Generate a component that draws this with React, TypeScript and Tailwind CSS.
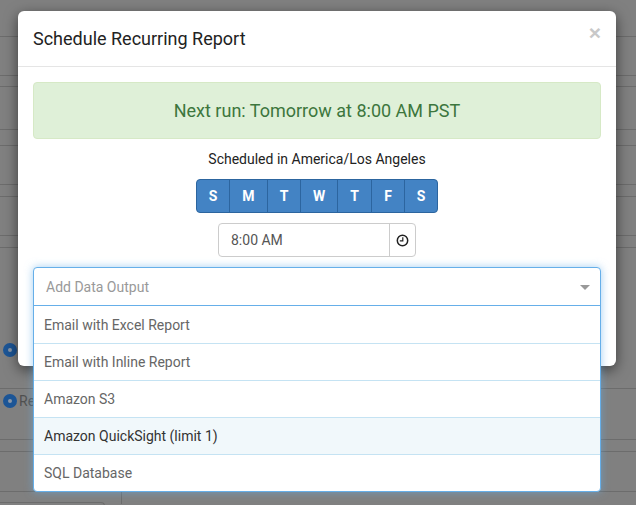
import React from 'react'

const days = [
  { label: 'S', w: 'w-[32px]' },
  { label: 'M', w: 'w-[38px]' },
  { label: 'T', w: 'w-[33px]' },
  { label: 'W', w: 'w-[37px]' },
  { label: 'T', w: 'w-[34px]' },
  { label: 'F', w: 'w-[33px]' },
  { label: 'S', w: 'w-[33px]' },
]

const outputs = [
  { label: 'Email with Excel Report', hover: false },
  { label: 'Email with Inline Report', hover: false },
  { label: 'Amazon S3', hover: false },
  { label: 'Amazon QuickSight (limit 1)', hover: true },
  { label: 'SQL Database', hover: false },
]

const Radio = () => (
  <span className="block w-[14px] h-[14px] shrink-0 rounded-full border-[5px] border-[#1c5596] bg-[#8a97a8]" />
)

const BackgroundPage = () => (
  <div className="h-[505px] overflow-hidden bg-[#808080] text-sm text-[#4f4f4f]">
    <div className="h-[37px] border-b border-[#6c6c6c]" />
    <div className="h-[39px] border-b border-[#6c6c6c]" />
    <div className="h-[11px] border-b border-[#6c6c6c]" />
    <div className="h-[43px] border-b border-[#6c6c6c]" />
    <div className="h-[16px] border-b border-[#6c6c6c]" />
    <div className="h-[39px] border-b border-[#6c6c6c]" />
    <div className="h-[12px] border-b border-[#6c6c6c]" />
    <div className="h-[39px] border-b border-[#6c6c6c]" />
    <div className="h-[12px] border-b border-[#6c6c6c]" />
    <div className="h-[102px] pt-[95px] pl-[3px]">
      <Radio />
    </div>
    <div className="h-[39px] border-b border-[#6c6c6c]" />
    <div className="h-[51px] border-b border-[#6c6c6c] flex items-start gap-[2px] pl-[3px] pt-[5px]">
      <Radio />
      <span className="leading-[14px]">Re</span>
    </div>
    <div className="h-[12px] border-b border-[#6c6c6c]" />
    <div className="h-[40px] border-b border-[#6c6c6c]" />
    <div className="h-[12px] flex">
      <div className="w-[122px] border-r border-[#6c6c6c] pt-[10px]">
        <div className="w-[105px] h-[4px] border-t border-r border-[#6c6c6c] rounded-tr-[4px]" />
      </div>
    </div>
  </div>
)

export default function App() {
  return (
    <div className="relative w-[636px] h-[505px] overflow-hidden font-['Roboto',sans-serif]">
      <BackgroundPage />

      <div className="absolute left-[18px] top-[11px] w-[598px] h-[355px] bg-white rounded-[6px] shadow-[0_4px_14px_rgba(0,0,0,0.55)]">
        <div className="relative h-[56px] border-b border-[#e5e5e5] pl-[15px] flex items-center">
          <h4 className="text-[18px] text-[#222222]">Schedule Recurring Report</h4>
          <span className="absolute right-[15px] top-[10px] text-[21px] leading-[24px] font-bold text-[#c8c8c8] font-['Liberation_Sans',sans-serif]">×</span>
        </div>

        <div className="relative px-[15px] pt-[15px]">
          <div className="h-[57px] rounded-[4px] bg-[#dff0d8] border border-[#d6e9c6] flex items-center justify-center text-[18px] text-[#3c763d]">
            Next run: Tomorrow at 8:00 AM PST
          </div>

          <p className="mt-[10px] h-[20px] leading-[20px] text-center text-[14px] text-[#222222]">
            Scheduled in America/Los Angeles
          </p>

          <div className="mt-[10px] flex justify-center">
            <div className="flex h-[34px] rounded-[4px] border border-[#2c659f] bg-[#4383c4] overflow-hidden">
              {days.map((day, i) => (
                <div
                  key={i}
                  className={`${day.w} flex items-center justify-center text-[14px] font-bold text-white ${i > 0 ? 'border-l border-[#2c659f]' : ''}`}
                >
                  {day.label}
                </div>
              ))}
            </div>
          </div>

          <div className="mt-[10px] flex justify-center">
            <div className="flex w-[198px] h-[34px] rounded-[4px] border border-[#cccccc] bg-white">
              <div className="flex-1 pl-[12px] flex items-center text-[14px] text-[#555555]">8:00 AM</div>
              <div className="w-[26px] border-l border-[#cccccc] flex items-center justify-center">
                <svg width="13" height="13" viewBox="0 0 13 13" fill="none" stroke="#222222">
                  <circle cx="6.5" cy="6.5" r="5.2" strokeWidth="1.5" />
                  <path d="M6.8 3.2V6.9H3.8" strokeWidth="1.2" />
                </svg>
              </div>
            </div>
          </div>

          <div className="absolute left-[15px] top-[200px] w-[568px] bg-white rounded-[4px] border border-[#66afe9] shadow-[0_0_8px_rgba(102,175,233,0.6)]">
            <div className="relative h-[38px] border-b border-[#66afe9] pl-[12px] pt-[1px] flex items-center text-[14px] text-[#999999]">
              Add Data Output
              <span className="absolute right-[10px] top-[17px] w-0 h-0 border-x-[5px] border-x-transparent border-t-[5px] border-t-[#999999]" />
            </div>
            {outputs.map((item, i) => (
              <div
                key={item.label}
                className={`h-[37px] pl-[10px] flex items-center text-[14px] ${i > 0 ? 'border-t border-[#c5e3f3]' : 'pt-[1px]'} ${item.hover ? 'bg-[#f1f8fb] text-[#333333]' : 'text-[#666666]'}`}
              >
                {item.label}
              </div>
            ))}
          </div>
        </div>
      </div>
    </div>
  )
}
